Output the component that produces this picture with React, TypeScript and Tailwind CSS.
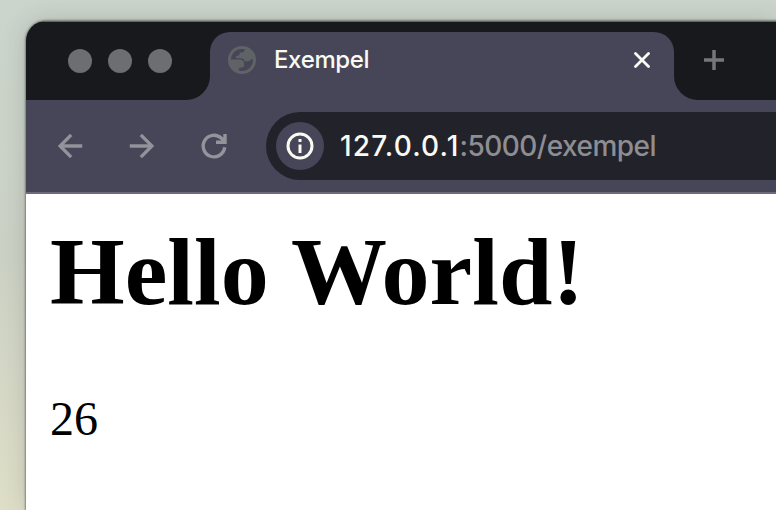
function Globe() {
  return (
    <svg className="h-7 w-7 shrink-0" viewBox="0 0 28 28">
      <circle cx="14" cy="14" r="14" fill="#606366" />
      <path
        fill="#464658"
        d="M3 13.600C3 8 7.500 3 13 3H16.500V4C16.500 5.500 15.500 6.500 14 6.500H12C11.700 8.800 11 10 9 10C7.300 10 7.300 12.200 9 12.200H13C15.300 12.200 16.500 13.300 16.500 15.200H19.500C21.700 15.200 22.500 14.500 23 13.200H25C25.300 20 20 25.300 13.500 25C11.800 25 10.800 24.500 10.800 23.500C10.800 22.300 11.500 21.500 12.700 21.500H14C15.300 21.500 16 20.700 16 19.400V17.500C16 15.300 14.500 13.600 12 13.600Z"
      />
    </svg>
  );
}

function Dot() {
  return <span className="h-6 w-6 rounded-full bg-[#6d6e71]" />;
}

export default function App() {
  return (
    <div className="h-[510px] w-[776px] overflow-hidden bg-linear-to-b from-[#cbd5cc] via-[#ccd1c5] to-[#dfdfc8] pt-[21px] pl-[26px]">
      <div className="flex h-[489px] w-[750px] flex-col overflow-hidden rounded-tl-[20px] bg-white shadow-[0_0_2px_1px_rgba(50,55,50,0.5),0_0_24px_rgba(50,55,50,0.2)]">
        <div className="flex h-[79px] shrink-0 bg-[#464658]">
          <div className="flex w-[184px] items-center gap-4 rounded-br-[24px] border-t border-[#65686b] bg-[#18191d] pl-[42px]">
            <Dot />
            <Dot />
            <Dot />
          </div>
          <div className="w-[464px] border-t border-[#65686b] bg-[#18191d] pt-[10px]">
            <div className="flex h-[68px] items-start rounded-t-[20px] bg-[#464658] pt-[14px] pl-[18px]">
              <Globe />
              <span className="ml-[18px] font-['Inter',sans-serif] text-[24px] leading-7 font-medium tracking-[-0.350px] text-[#fafaf2]">Exempel</span>
              <svg className="mt-[6px] ml-auto mr-[24px] h-4 w-4" viewBox="0 0 16 16" stroke="#fafaf2" strokeWidth="2.800" strokeLinecap="round">
                <path d="M1.500 1.500L14.500 14.500M14.500 1.500L1.500 14.500" />
              </svg>
            </div>
          </div>
          <div className="grow rounded-bl-[24px] border-t border-[#65686b] bg-[#18191d] pt-[28px] pl-[30px]">
            <svg className="h-5 w-5" viewBox="0 0 20 20" stroke="#77777a" strokeWidth="3.500">
              <path d="M0 10H20M10 0V20" />
            </svg>
          </div>
        </div>
        <div className="flex h-[94px] shrink-0 items-start border-b-2 border-[#6b6b7b] bg-[#464658] pt-3 pl-[26px]">
          <svg className="mt-4 h-9 w-9" viewBox="0 0 24 24" fill="#93939c" stroke="#93939c" strokeWidth="0.300">
            <path d="M20 11H7.830l5.590-5.590L12 4l-8 8 8 8 1.410-1.410L7.830 13H20v-2z" />
          </svg>
          <svg className="mt-4 ml-9 h-9 w-9" viewBox="0 0 24 24" fill="#93939c" stroke="#93939c" strokeWidth="0.300">
            <path d="M12 4l-1.410 1.410L16.170 11H4v2h12.170l-5.580 5.590L12 20l8-8z" />
          </svg>
          <svg className="mt-4 ml-9 h-9 w-9" viewBox="0 0 36 36" fill="none" stroke="#93939c" strokeWidth="3.400">
            <path d="M28.700 19.300A10.800 10.800 0 1 1 25.500 10.300L28.500 13.200M29 6V14.300H20" />
          </svg>
          <div className="ml-[34px] flex h-[68px] grow items-center rounded-l-full bg-[#22222b] pl-[10px]">
            <div className="flex h-12 w-12 items-center justify-center rounded-full bg-[#464658]">
              <svg className="h-7 w-7" viewBox="0 0 28 28" fill="none" stroke="#fafaf2" strokeWidth="3">
                <circle cx="14" cy="14" r="12" />
                <path d="M14 12.500V21M14 7V10" />
              </svg>
            </div>
            <span className="ml-4 font-['Inter',sans-serif] text-[28px] leading-9 whitespace-nowrap text-[#8e8e92]">
              <span className="font-medium tracking-[1.150px] text-[#fafaf2]">127.0.0.1</span>
              <span className="font-medium tracking-[-0.530px]">:5000/exempel</span>
            </span>
          </div>
        </div>
        <main className="pt-[23px] pl-6 font-['Liberation_Serif','Times_New_Roman',serif] text-black">
          <h1 className="text-[96px] leading-[110px] font-bold whitespace-nowrap">Hello World!</h1>
          <p className="mt-16 text-[48px] leading-[56px]">26</p>
        </main>
      </div>
    </div>
  );
}
